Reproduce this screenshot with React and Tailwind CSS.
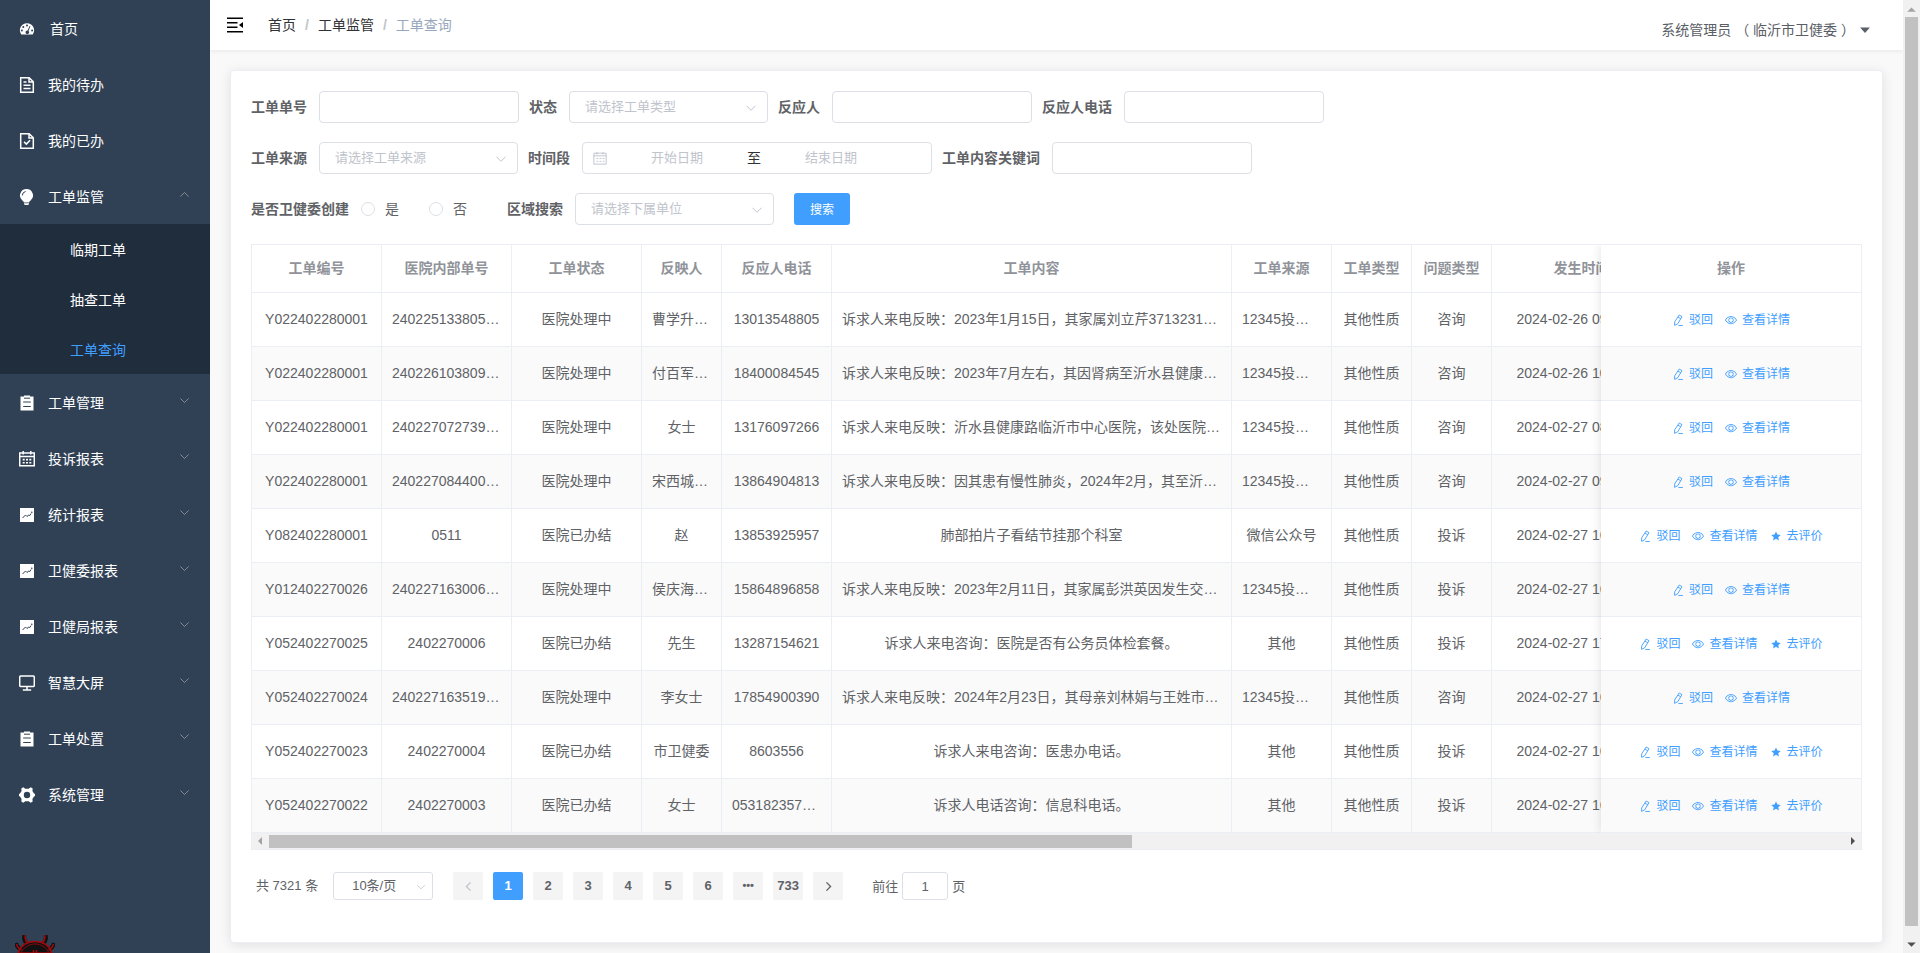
import React, { useState } from 'react'

const COL_WIDTHS = ['w-[130px]', 'w-[130px]', 'w-[130px]', 'w-[80px]', 'w-[110px]', 'w-[400px]', 'w-[100px]', 'w-[80px]', 'w-[80px]', 'w-[180px]']
const HEADERS = ['工单编号', '医院内部单号', '工单状态', '反映人', '反应人电话', '工单内容', '工单来源', '工单类型', '问题类型', '发生时间']

const ROWS = [
  ['Y022402280001', '240225133805…', '医院处理中', '曹学升…', '13013548805', '诉求人来电反映：2023年1月15日，其家属刘立芹3713231…', '12345投…', '其他性质', '咨询', '2024-02-26 09:10:00'],
  ['Y022402280001', '240226103809…', '医院处理中', '付百军…', '18400084545', '诉求人来电反映：2023年7月左右，其因肾病至沂水县健康…', '12345投…', '其他性质', '咨询', '2024-02-26 10:38:00'],
  ['Y022402280001', '240227072739…', '医院处理中', '女士', '13176097266', '诉求人来电反映：沂水县健康路临沂市中心医院，该处医院…', '12345投…', '其他性质', '咨询', '2024-02-27 08:27:00'],
  ['Y022402280001', '240227084400…', '医院处理中', '宋西城…', '13864904813', '诉求人来电反映：因其患有慢性肺炎，2024年2月，其至沂…', '12345投…', '其他性质', '咨询', '2024-02-27 09:44:00'],
  ['Y082402280001', '0511', '医院已办结', '赵', '13853925957', '肺部拍片子看结节挂那个科室', '微信公众号', '其他性质', '投诉', '2024-02-27 16:05:00'],
  ['Y012402270026', '240227163006…', '医院处理中', '侯庆海…', '15864896858', '诉求人来电反映：2023年2月11日，其家属彭洪英因发生交…', '12345投…', '其他性质', '投诉', '2024-02-27 16:30:00'],
  ['Y052402270025', '2402270006', '医院已办结', '先生', '13287154621', '诉求人来电咨询：医院是否有公务员体检套餐。', '其他', '其他性质', '投诉', '2024-02-27 17:12:00'],
  ['Y052402270024', '240227163519…', '医院处理中', '李女士', '17854900390', '诉求人来电反映：2024年2月23日，其母亲刘林娟与王姓市…', '12345投…', '其他性质', '咨询', '2024-02-27 16:35:00'],
  ['Y052402270023', '2402270004', '医院已办结', '市卫健委', '8603556', '诉求人来电咨询：医患办电话。', '其他', '其他性质', '投诉', '2024-02-27 16:20:00'],
  ['Y052402270022', '2402270003', '医院已办结', '女士', '053182357…', '诉求人电话咨询：信息科电话。', '其他', '其他性质', '投诉', '2024-02-27 16:10:00']
]

/* ---------- icons ---------- */

function Svg({ className = 'size-4', children, ...rest }) {
  return (
    <svg viewBox="0 0 16 16" fill="none" stroke="currentColor" strokeWidth="1.3" aria-hidden="true" className={`shrink-0 ${className}`} {...rest}>
      {children}
    </svg>
  )
}

const DashboardIcon = () => (
  <Svg stroke="none">
    <path fill="currentColor" fillRule="evenodd" d="M8 2.2a7 7 0 0 0-6 10.7c.2.4.5.6.9.6h10.2c.4 0 .7-.2.9-.6A7 7 0 0 0 8 2.2zM8 3.4a1 1 0 1 1 0 2 1 1 0 0 1 0-2zM4.3 5a1 1 0 1 1 0 2 1 1 0 0 1 0-2zM2.9 8.4a1 1 0 1 1 0 2 1 1 0 0 1 0-2zM13.1 8.4a1 1 0 1 1 0 2 1 1 0 0 1 0-2zM10.6 4.9l.8.4-1.9 4.6a1.8 1.8 0 1 1-.9-.4z" />
  </Svg>
)

const DocumentIcon = () => (
  <Svg strokeWidth="1.5">
    <path d="M1.7.7h8.4l4.2 4.1v10.5H1.7zM10 .7v4.2h4.3" />
    <path d="M4.5 5h3M4.5 8.2h7M4.5 11.4h7" />
  </Svg>
)

const DocumentCheckedIcon = () => (
  <Svg strokeWidth="1.5">
    <path d="M1.7.7h8.4l4.2 4.1v10.5H1.7zM10 .7v4.2h4.3" />
    <path d="M5 8.8l2.3 2.3 3.8-3.9" />
  </Svg>
)

const BulbIcon = () => (
  <Svg stroke="none">
    <path fill="currentColor" d="M7.5 0a6.5 6.5 0 0 0-3.9 11.7c.8.6 1.2 1.1 1.3 1.800h5.2c.1-.7.5-1.2 1.3-1.800A6.5 6.5 0 0 0 7.5 0zM5 14.2h5v.7l-.8 1.1H5.800l-.8-1.1z" />
    <path stroke="#304156" strokeWidth="1" fill="none" d="M3.3 6.5a4.2 4.2 0 0 1 3.3-4" />
  </Svg>
)

const OrderIcon = () => (
  <Svg stroke="none">
    <path fill="currentColor" d="M1.5 1.5H5v-1h6v1h3.500v14h-13z" />
    <path stroke="#304156" strokeWidth="1" d="M5 3.2h6M4.2 7h7.6M4.2 11.5h7.6" />
  </Svg>
)

const DateIcon = () => (
  <Svg strokeWidth="1.5">
    <path d="M.7 2h14.6v12.8H.7zM.7 5.6h14.6" />
    <path d="M4.2 0v3.5M11.8 0v3.5" />
    <path strokeWidth="1.6" strokeDasharray="2 1.3" d="M3.7 8.6h9M3.7 11.7h9" />
  </Svg>
)

const MarketingIcon = () => (
  <Svg stroke="none">
    <path fill="currentColor" d="M1 1h14v14H1z" />
    <path stroke="#304156" strokeWidth="1" fill="none" d="M3.500 11l3-3 1.500 1.500L9.800 8l1 .5L12 6.500" />
    <circle cx="12.8" cy="5.2" r=".8" fill="#304156" />
  </Svg>
)

const MonitorIcon = () => (
  <Svg strokeWidth="1.5">
    <rect x=".7" y="1" width="14.6" height="10.6" rx="1.3" />
    <path d="M8 11.600v3M3.800 15h8.400" />
  </Svg>
)

const ToolsIcon = () => (
  <Svg stroke="none">
    <path fill="currentColor" fillRule="evenodd" d="M4.3.3l2 1.4h3.4l2-1.400 2 1.200-.3 2.400L15 6.600l1 .4v2l-1 .4-1.600 2.700.3 2.400-2 1.200-2-1.400H6.300l-2 1.400-2-1.200.3-2.400L1 9.400 0 9V7l1-.4 1.600-2.700-.3-2.400zM8 4.800a3.200 3.200 0 1 0 0 6.400 3.200 3.200 0 0 0 0-6.400z" />
  </Svg>
)

const Chevron = ({ className }) => (
  <Svg className={className}>
    <path d="M2 5l6 6 6-6" />
  </Svg>
)

const EditIcon = () => (
  <Svg className="size-3" strokeWidth="1.2">
    <path d="M9.600 1.300l3.700 2.200-5.700 9.600-4.200 2 .2-4.600zM8 4.200l3.700 2.100" />
    <path d="M8.500 15.300h6" />
  </Svg>
)

const ViewIcon = () => (
  <svg viewBox="0 0 1024 1024" fill="currentColor" aria-hidden="true" className="size-3 shrink-0">
    <path d="M512 160c320 0 512 352 512 352S832 864 512 864 0 512 0 512s192-352 512-352m0 64c-225.280 0-384.128 208.064-436.800 288 52.608 79.872 211.456 288 436.800 288 225.280 0 384.128-208.064 436.800-288-52.608-79.872-211.456-288-436.800-288m0 64a224 224 0 1 1 0 448 224 224 0 0 1 0-448m0 64a160.192 160.192 0 0 0-160 160c0 88.192 71.744 160 160 160s160-71.808 160-160-71.744-160-160-160" />
  </svg>
)

const StarIcon = () => (
  <Svg className="size-3" stroke="none">
    <path fill="currentColor" d="M8 2l1.900 4.100 4.400.5-3.300 3 .9 4.400L8 11.800 4.100 14l.9-4.400-3.300-3 4.400-.5z" />
  </Svg>
)

const BugIcon = () => (
  <svg viewBox="0 0 40 18" fill="none" aria-hidden="true" className="h-[18px] w-10">
    <g stroke="#111" strokeWidth="4">
      <path d="M9.500 0c-1 4 0 7 3 9M30.500 0c1 4 0 7-3 9" />
      <path d="M1 8c1 4 3 6 6 7M39 8c-1 4-3 6-6 7" />
    </g>
    <path d="M3 18C6 10 13 6.500 20 6.500S34 10 37 18z" fill="#111" stroke="#a00a0f" strokeWidth="1.5" />
    <path d="M6 18c3-6 8-9 14-9s11 3 14 9" stroke="#8b0a0e" strokeWidth="1" />
    <g stroke="#a00a0f" strokeWidth="1.6">
      <path d="M10.500 0c-1 4 0 6 2.500 8M29.500 0c1 4 0 6-2.500 8" />
      <path d="M1.500 9c1 3 2 5 5 6M38.500 9c-1 3-2 5-5 6" />
      <path d="M18.500 15v3M21.500 15v3" />
    </g>
  </svg>
)

/* ---------- sidebar ---------- */

const MENU_TOP = [
  { label: '我的待办', icon: DocumentIcon },
  { label: '我的已办', icon: DocumentCheckedIcon }
]

const MENU_GROUPS = [
  { label: '工单管理', icon: OrderIcon },
  { label: '投诉报表', icon: DateIcon },
  { label: '统计报表', icon: MarketingIcon },
  { label: '卫健委报表', icon: MarketingIcon },
  { label: '卫健局报表', icon: MarketingIcon },
  { label: '智慧大屏', icon: MonitorIcon },
  { label: '工单处置', icon: OrderIcon },
  { label: '系统管理', icon: ToolsIcon }
]

function MenuItem({ label, icon: Icon, arrow, open }) {
  return (
    <a href="#" className="flex h-14 items-center pt-0.5 pr-5 pl-[19px] text-white">
      <Icon />
      <span className="ml-[13px] flex-1">{label}</span>
      {arrow && <Chevron className={`mb-1.5 size-[11px] text-[#909399] ${open ? 'rotate-180' : ''}`} />}
    </a>
  )
}

function Sidebar() {
  return (
    <nav className="relative w-[210px] shrink-0 overflow-hidden bg-[#304156]">
      <a href="#" className="flex h-14 items-center pt-0.5 pl-[19px] text-white">
        <DashboardIcon />
        <span className="ml-[15px]">首页</span>
      </a>
      {MENU_TOP.map(item => (
        <MenuItem key={item.label} {...item} />
      ))}
      <MenuItem label="工单监管" icon={BulbIcon} arrow open />
      <div className="bg-[#1f2d3d]">
        {['临期工单', '抽查工单', '工单查询'].map(name => (
          <a
            key={name}
            href="#"
            className={`flex h-[50px] items-center pt-0.5 pl-[70px] ${name === '工单查询' ? 'text-[#409eff]' : 'text-white'}`}
          >
            {name}
          </a>
        ))}
      </div>
      {MENU_GROUPS.map(item => (
        <MenuItem key={item.label} {...item} arrow />
      ))}
      <div className="absolute bottom-0 left-[15px]">
        <BugIcon />
      </div>
    </nav>
  )
}

/* ---------- top bar ---------- */

function Navbar() {
  return (
    <header className="relative flex h-[50px] items-center justify-between bg-white pr-8 pl-[17px] shadow-[0_1px_4px_rgba(0,21,41,0.08)]">
      <div className="flex items-center">
        <button type="button" aria-label="收起菜单">
          <Svg className="size-4 text-black" strokeWidth="1.5">
            <path d="M0 1.200h16M0 5.700h10.500M0 10.200h10.500M0 14.700h16" />
            <path d="M16 5v6l-4-3z" fill="currentColor" stroke="none" />
          </Svg>
        </button>
        <ol className="ml-[25px] flex">
          <li><a href="#" className="text-[#303133]">首页</a></li>
          <li className="mx-[9px] font-bold text-[#c0c4cc]">/</li>
          <li><a href="#" className="text-[#303133]">工单监管</a></li>
          <li className="mx-[9px] font-bold text-[#c0c4cc]">/</li>
          <li className="text-[#97a8be]">工单查询</li>
        </ol>
      </div>
      <button type="button" className="mt-[10px] flex items-center gap-1 text-[#5a5e66]">
        <span>系统管理员</span>
        <span>（ 临沂市卫健委 ）</span>
        <Svg className="size-3" stroke="none">
          <path fill="currentColor" d="M1.500 4.500h13L8 12z" />
        </Svg>
      </button>
    </header>
  )
}

/* ---------- search form ---------- */

function TextField({ id, label }) {
  return (
    <div className="mr-[10px] flex items-center">
      <label htmlFor={id} className="pr-3 font-bold">{label}</label>
      <input id={id} type="text" className="h-8 w-[200px] rounded border border-[#dcdfe6] bg-white px-[15px] text-[13px] outline-none" />
    </div>
  )
}

function SelectField({ id, label, placeholder }) {
  return (
    <div className="mr-[10px] flex items-center">
      <label htmlFor={id} className="pr-3 font-bold">{label}</label>
      <div className="relative w-[199px]">
        <select id={id} className="block h-8 w-full appearance-none rounded border border-[#dcdfe6] bg-white px-[15px] text-[13px] text-[#c0c4cc] outline-none">
          <option>{placeholder}</option>
        </select>
        <Chevron className="pointer-events-none absolute top-[11px] right-[11px] size-3 text-[#c0c4cc]" />
      </div>
    </div>
  )
}

function SearchForm() {
  const [created, setCreated] = useState('')

  return (
    <form className="text-[#606266]" onSubmit={e => e.preventDefault()}>
      <div className="mb-[19px] flex h-8 items-center">
        <TextField id="orderNo" label="工单单号" />
        <SelectField id="status" label="状态" placeholder="请选择工单类型" />
        <TextField id="person" label="反应人" />
        <TextField id="phone" label="反应人电话" />
      </div>

      <div className="mb-[19px] flex h-8 items-center">
        <SelectField id="source" label="工单来源" placeholder="请选择工单来源" />
        <div className="mr-[10px] flex items-center">
          <label htmlFor="startDate" className="pr-3 font-bold">时间段</label>
          <div className="flex h-8 w-[350px] items-center rounded border border-[#dcdfe6] bg-white pr-[33px] pl-[10px] text-[13px]">
            <Svg className="mr-[3px] size-[14px] text-[#c0c4cc]" strokeWidth="1.1">
              <path d="M1 2.500h14V15H1zM1 5.500h14M4.500 1v3M11.500 1v3" />
              <path strokeDasharray="2 1.5" d="M4 8.500h9M4 11.800h9" />
            </Svg>
            <input id="startDate" placeholder="开始日期" className="min-w-0 flex-1 text-center outline-none placeholder:text-[#c0c4cc]" />
            <span className="w-5 text-center text-sm text-[#303133]">至</span>
            <input aria-label="结束日期" placeholder="结束日期" className="min-w-0 flex-1 text-center outline-none placeholder:text-[#c0c4cc]" />
          </div>
        </div>
        <TextField id="keyword" label="工单内容关键词" />
      </div>

      <div className="mb-[19px] flex h-8 items-center">
        <div className="mr-[10px] flex items-center">
          <span className="pr-3 font-bold">是否卫健委创建</span>
          {['是', '否'].map(opt => (
            <label key={opt} className="mr-[30px] flex items-center gap-[10px]">
              <input
                type="radio"
                name="created"
                checked={created === opt}
                onChange={() => setCreated(opt)}
                className="size-[14px] appearance-none rounded-full border border-[#dcdfe6] bg-white checked:border-4 checked:border-[#409eff]"
              />
              {opt}
            </label>
          ))}
        </div>
        <SelectField id="area" label="区域搜索" placeholder="请选择下属单位" />
        <button type="submit" className="ml-[10px] h-8 w-14 rounded-[3px] bg-[#409eff] pt-0.5 text-xs text-white">搜索</button>
      </div>
    </form>
  )
}

/* ---------- table ---------- */

function OrderTable() {
  return (
    <div className="border border-[#ebeef5]">
      <div className="flex overflow-hidden">
        <div className="min-w-0 flex-1 overflow-hidden">
          <table className="w-[1420px] table-fixed border-separate border-spacing-0 text-center">
            <thead>
              <tr>
                {HEADERS.map((h, i) => (
                  <th key={h} className={`h-12 border-r border-b border-[#ebeef5] px-[10px] pb-0.5 font-bold whitespace-nowrap text-[#909399] ${COL_WIDTHS[i]}`}>
                    {h}
                  </th>
                ))}
              </tr>
            </thead>
            <tbody className="text-[#606266]">
              {ROWS.map((row, r) => (
                <tr key={r} className="even:bg-[#fafafa]">
                  {row.map((text, c) => (
                    <td
                      key={c}
                      className={`h-[54px] overflow-hidden border-r border-b border-[#ebeef5] pb-0.5 whitespace-nowrap ${text.endsWith('…') ? 'pl-[10px] text-left' : 'px-[10px]'}`}
                    >
                      {text}
                    </td>
                  ))}
                </tr>
              ))}
            </tbody>
          </table>
        </div>

        {/* fixed action column */}
        <div className="relative w-[260px] shrink-0 shadow-[0_0_10px_rgba(0,0,0,0.12)]">
          <table className="w-full table-fixed border-separate border-spacing-0 bg-white">
            <thead>
              <tr>
                <th className="h-12 border-b border-[#ebeef5] pb-0.5 font-bold text-[#909399]">操作</th>
              </tr>
            </thead>
            <tbody>
              {ROWS.map((row, r) => (
                <tr key={r} className="even:bg-[#fafafa]">
                  <td className="h-[54px] border-b border-[#ebeef5]">
                    <div className="flex justify-center gap-3 text-xs text-[#409eff]">
                      <button type="button" className="flex items-center gap-[5px]"><EditIcon />驳回</button>
                      <button type="button" className="flex items-center gap-[5px]"><ViewIcon />查看详情</button>
                      {row[2] === '医院已办结' && (
                        <button type="button" className="flex items-center gap-[5px]"><StarIcon />去评价</button>
                      )}
                    </div>
                  </td>
                </tr>
              ))}
            </tbody>
          </table>
        </div>
      </div>

      {/* horizontal scrollbar */}
      <div className="flex h-4 items-center bg-[#f1f1f1]">
        <Svg className="mr-[1px] size-4" stroke="none"><path fill="#a3a3a3" d="M10 4v8L6 8z" /></Svg>
        <div className="flex-1">
          <div className="h-[13px] w-[547px] min-w-[54.75%] bg-[#c1c1c1]" />
        </div>
        <Svg className="size-4" stroke="none"><path fill="#505050" d="M6 4v8l4-4z" /></Svg>
      </div>
    </div>
  )
}

/* ---------- pagination ---------- */

function Pagination() {
  const [page, setPage] = useState('1')

  return (
    <div className="my-[22px] flex h-7 items-center pl-[5px] text-[13px] text-[#606266]">
      <span className="mr-[15px]">共 7321 条</span>
      <div className="relative mr-5 w-[100px]">
        <select aria-label="每页条数" className="block h-7 w-full appearance-none rounded-[3px] border border-[#dcdfe6] bg-white pl-[18px] text-[13px] outline-none">
          <option>10条/页</option>
        </select>
        <Chevron className="pointer-events-none absolute top-[10px] right-[7px] size-[10px] text-[#c0c4cc]" />
      </div>
      <div className="flex gap-[10px] font-bold">
        <button type="button" aria-label="上一页" className="grid h-7 w-[30px] place-items-center rounded-[2px] bg-[#f4f4f5] text-[#c0c4cc]">
          <Chevron className="size-[11px] rotate-90 stroke-2" />
        </button>
        {['1', '2', '3', '4', '5', '6', '•••', '733'].map(p => (
          <button
            key={p}
            type="button"
            onClick={() => p !== '•••' && setPage(p)}
            className={`h-7 w-[30px] rounded-[2px] ${p === page ? 'bg-[#409eff] text-white' : 'bg-[#f4f4f5]'} ${p === '•••' ? 'text-[11px]' : ''}`}
          >
            {p}
          </button>
        ))}
        <button type="button" aria-label="下一页" className="grid h-7 w-[30px] place-items-center rounded-[2px] bg-[#f4f4f5]">
          <Chevron className="size-[11px] -rotate-90 stroke-2" />
        </button>
      </div>
      <label htmlFor="jumper" className="ml-[29px] pt-0.5">前往</label>
      <input id="jumper" value={page} onChange={e => setPage(e.target.value)} className="mx-1 h-7 w-[46px] rounded-[3px] border border-[#dcdfe6] bg-white text-center outline-none" />
      <span className="pt-0.5">页</span>
    </div>
  )
}

/* ---------- page scrollbar ---------- */

function PageScrollbar() {
  return (
    <div className="flex w-[17px] shrink-0 flex-col items-center bg-[#f1f1f1]">
      <Svg className="size-[17px]" stroke="none"><path fill="#a3a3a3" d="M4 11h8L8 7z" /></Svg>
      <div className="w-[13px] flex-1 bg-[#c1c1c1]" />
      <Svg className="mt-[10px] size-[17px]" stroke="none"><path fill="#505050" d="M4 6h8l-4 4z" /></Svg>
    </div>
  )
}

function App() {
  return (
    <div lang="zh-CN" className="flex h-screen overflow-hidden bg-[#f9f9f9] font-['Liberation_Sans','Noto_Sans_CJK_SC',sans-serif] text-sm">
      <Sidebar />
      <main className="min-w-0 flex-1 overflow-hidden">
        <Navbar />
        <section className="m-5 rounded border border-[#ebeef5] bg-white p-5 shadow-[0_2px_12px_rgba(0,0,0,0.1)]">
          <SearchForm />
          <OrderTable />
          <Pagination />
        </section>
      </main>
      <PageScrollbar />
    </div>
  )
}

export default App
